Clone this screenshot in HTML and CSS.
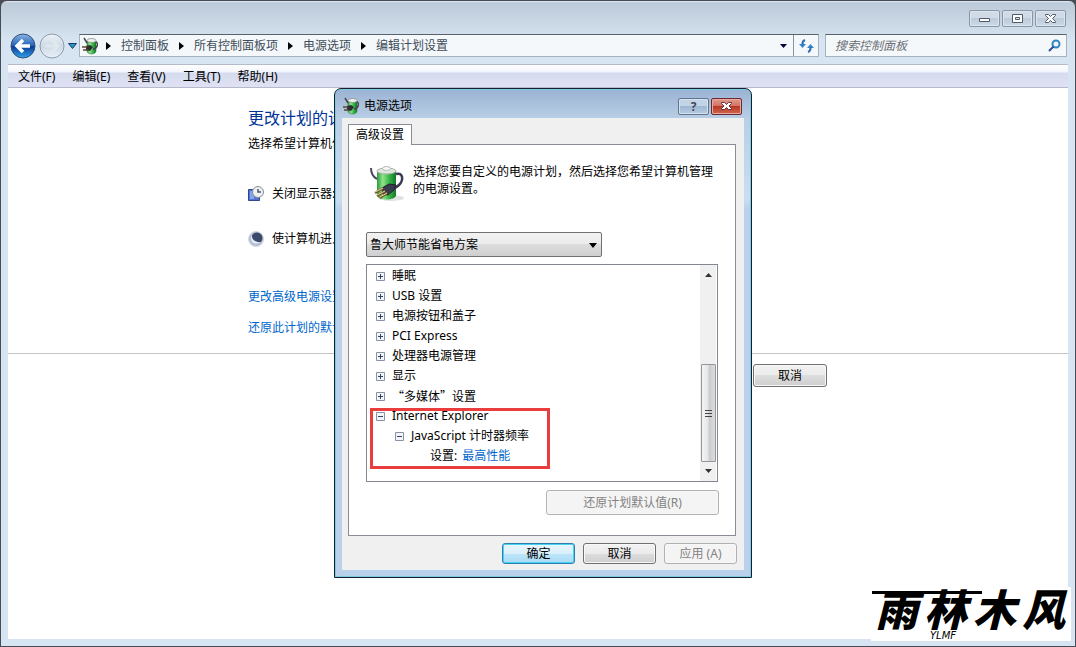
FILE: index.html
```html
<!DOCTYPE html>
<html lang="zh-CN">
<head>
    <meta charset="UTF-8">
    <meta name="viewport" content="width=device-width, initial-scale=1.0">
    <title>编辑计划设置</title>
    <link rel="stylesheet" href="styles.css">
</head>
<body>

<svg class="defs" aria-hidden="true">
    <defs>
        <linearGradient id="green" x1="0" x2="1" y1="0" y2="0">
            <stop offset="0" stop-color="#2c9a3c"/>
            <stop offset="0.3" stop-color="#8fe38c"/>
            <stop offset="0.65" stop-color="#35b544"/>
            <stop offset="1" stop-color="#14762a"/>
        </linearGradient>
        <linearGradient id="blue" x1="0" x2="0" y1="0" y2="1">
            <stop offset="0" stop-color="#8db4e2"/>
            <stop offset="0.48" stop-color="#2463b8"/>
            <stop offset="0.52" stop-color="#0b3a93"/>
            <stop offset="1" stop-color="#2fa4ee"/>
        </linearGradient>
        <linearGradient id="glass" x1="0" x2="0" y1="0" y2="1">
            <stop offset="0" stop-color="#eef3f8"/>
            <stop offset="0.5" stop-color="#cdd9e5"/>
            <stop offset="1" stop-color="#e9f1f8"/>
        </linearGradient>
        <symbol id="battery" viewBox="0 0 36 38">
            <ellipse cx="21" cy="33" rx="13" ry="3" fill="#e2e2e2"/>
            <path d="M7 6v24c0 6 19 6 19 0V6z" fill="url(#green)"/>
            <ellipse cx="16.500" cy="6" rx="9.500" ry="3" fill="#dfe5df" stroke="#a8b0a8"/>
            <ellipse cx="16.500" cy="3.500" rx="4" ry="2" fill="#f6f8f6" stroke="#b4bab4"/>
            <path d="M1 3c0 6 2 9 6 11" fill="none" stroke="#4a4862" stroke-width="2"/>
            <path d="M26 9c7-2 8 6 3 11-2 2-4 3-6 4" fill="none" stroke="#3d3b54" stroke-width="2.500"/>
            <path d="M12 23l7-4 7 1-2 5-6 5-5-1z" fill="#3a3b4c" stroke="#20212e"/>
            <path d="M13 23l-8 5M15 26l-8 5M17 28l-7 5" stroke="#6b5a2c" stroke-width="2.500"/>
            <path d="M13 23l-8 4M15 26l-8 4M17 28l-7 4" stroke="#f0d890"/>
        </symbol>
        <symbol id="battery-small" viewBox="0 0 16 18">
            <path d="M5 4v10c0 4 9 4 9 0V4z" fill="url(#green)" stroke="#2c6d36" stroke-width=".5"/>
            <ellipse cx="9.500" cy="3.500" rx="4.500" ry="2" fill="#eef2ee" stroke="#7c827c" stroke-width=".7"/>
            <path d="M2 1l3 5M14 5c3 1 1 7-3 7" fill="none" stroke="#47454f" stroke-width="1.500"/>
            <path d="M4 9l4-1 3 2-3 4-4-1z" fill="#2c2d35"/>
            <path d="M0 10h5M1 13h5" stroke="#594a2c" stroke-width="1.500"/>
        </symbol>
        <symbol id="right" viewBox="0 0 5 8"><path d="M0 0l5 4-5 4z"/></symbol>
        <symbol id="plus" viewBox="0 0 9 9">
            <path d="M.5.5h8v8h-8z" fill="#f4f5f8" stroke="#8991a5"/><path d="M2 4.500h5M4.500 2v5" stroke="#2d4368"/>
        </symbol>
        <symbol id="minus" viewBox="0 0 9 9">
            <path d="M.5.5h8v8h-8z" fill="#f4f5f8" stroke="#8991a5"/><path d="M2 4.500h5" stroke="#2d4368"/>
        </symbol>
    </defs>
</svg>

<div class="window">
    <header class="caption">
        <button class="win-btn" aria-label="最小化">
            <svg width="31" height="17"><path d="M10.500 8.500h10v3h-10z" fill="#fff" stroke="#505a68"/></svg>
        </button>
        <button class="win-btn" aria-label="最大化">
            <svg width="31" height="17"><path d="M10.500 4.500h10v8h-10z" fill="#fff" stroke="#505a68"/><path d="M13.500 7.500h4v2h-4z" fill="#dce5ee" stroke="#505a68"/></svg>
        </button>
        <button class="win-btn" aria-label="关闭">
            <svg width="31" height="17"><path d="M10.500 4.500h3l2 2 2-2h3v1l-3 3 3 3v1h-3l-2-2-2 2h-3v-1l3-3-3-3z" fill="#fff" stroke="#505a68"/></svg>
        </button>
    </header>

    <nav class="navbar">
        <div class="travel">
            <button aria-label="后退">
                <svg width="26" height="26"><circle cx="13" cy="13" r="12" fill="url(#blue)" stroke="#355078"/><path d="M20 13H8M13 7l-6 6 6 6" fill="none" stroke="#fff" stroke-width="3.500"/></svg>
            </button>
            <button aria-label="前进">
                <svg width="26" height="26"><circle cx="13" cy="13" r="12" fill="url(#glass)" stroke="#8d9aaa"/><path d="M6 13h12M13 7l6 6-6 6" fill="none" stroke="#dfe7ef" stroke-width="3"/></svg>
            </button>
            <button aria-label="最近的页面">
                <svg width="9" height="6"><path d="M.5.5h8l-4 5z" fill="#2596cc" stroke="#1c3c66"/></svg>
            </button>
        </div>
        <div class="address">
            <svg class="crumb-icon" width="16" height="18"><use href="#battery-small"/></svg>
            <svg width="5" height="8"><use href="#right"/></svg>
            <a href="#">控制面板</a>
            <svg width="5" height="8"><use href="#right"/></svg>
            <a href="#">所有控制面板项</a>
            <svg width="5" height="8"><use href="#right"/></svg>
            <a href="#">电源选项</a>
            <svg width="5" height="8"><use href="#right"/></svg>
            <a href="#">编辑计划设置</a>
            <button class="drop" aria-label="以前的位置"><svg width="7" height="4"><path d="M0 0h7L3.500 4z" fill="#00003c"/></svg></button>
            <button class="refresh" aria-label="刷新">
                <svg width="15" height="14"><path d="M0 5h7L3.500 9zM8 9h7l-3.500-4z" fill="#3585c8"/><path d="M6 1C3 2 3.500 4 3.500 6M9 13c3-1 2.500-3 2.500-5" fill="none" stroke="#2d70b4" stroke-width="2"/></svg>
            </button>
        </div>
        <div class="search">
            <input type="text" placeholder="搜索控制面板" aria-label="搜索控制面板">
            <svg width="13" height="13"><circle cx="8" cy="5" r="3.500" fill="#e9f6fe" stroke="#3383bf" stroke-width="2"/><path d="M5.500 7.500L1 12" stroke="#29508c" stroke-width="2"/></svg>
        </div>
    </nav>

    <div class="menubar">
        <button>文件(F)</button>
        <button>编辑(E)</button>
        <button>查看(V)</button>
        <button>工具(T)</button>
        <button>帮助(H)</button>
    </div>

    <main class="page">
        <section class="plan">
            <h1>更改计划的设</h1>
            <p class="intro">选择希望计算机使</p>
            <div class="option">
                <svg width="16" height="16"><path d="M.5 3.500h11v11H.5z" fill="#4f73cf" stroke="#31468e"/><path d="M2 5h4v8H2z" fill="#82a5ec"/><circle cx="10" cy="6" r="5.500" fill="#edf0f3" stroke="#858b96"/><path d="M10 3v3h3" fill="none" stroke="#4b5365" stroke-width="1.500"/></svg>
                <span>关闭显示器:</span>
            </div>
            <div class="option">
                <svg width="16" height="16"><circle cx="8" cy="8" r="7.500" fill="#b3bfd4" stroke="#d3d9e3"/><circle cx="9" cy="7" r="5.500" fill="#3c4a69"/><path d="M4 3c-1 5 3 9 9 8-4 4-13 1-9-8z" fill="#e6edf8"/></svg>
                <span>使计算机进入</span>
            </div>
            <a class="plan-link" href="#">更改高级电源设置</a>
            <a class="plan-link" href="#">还原此计划的默认</a>
        </section>
        <footer class="page-actions">
            <button class="btn">取消</button>
        </footer>
    </main>

    <!-- 电源选项对话框 -->
    <div class="dialog" role="dialog" aria-labelledby="dialog-title">
        <div class="dialog-caption">
            <svg width="16" height="18"><use href="#battery-small"/></svg>
            <h2 id="dialog-title">电源选项</h2>
            <button class="dlg-btn" aria-label="帮助">?</button>
            <button class="dlg-btn dlg-close" aria-label="关闭">
                <svg width="13" height="10"><path d="M1.500 1.500h3l2 2 2-2h3v1L9 5l2.500 2.500v1h-3l-2-2-2 2h-3v-1L4 5 1.500 2.500z" fill="#fff" stroke="#64343a"/></svg>
            </button>
        </div>
        <div class="dialog-body">
            <div class="tabs"><button class="tab">高级设置</button></div>
            <div class="panel">
                <div class="info">
                    <svg width="36" height="38"><use href="#battery"/></svg>
                    <p>选择您要自定义的电源计划，然后选择您希望计算机管理的电源设置。</p>
                </div>
                <div class="combo">
                    <select aria-label="电源计划">
                        <option>鲁大师节能省电方案</option>
                    </select>
                    <svg width="8" height="5"><path d="M0 0h8L4 5z"/></svg>
                </div>
                <div class="tree">
                    <ul>
                        <li><button aria-label="展开"><svg width="9" height="9"><use href="#plus"/></svg></button>睡眠</li>
                        <li><button aria-label="展开"><svg width="9" height="9"><use href="#plus"/></svg></button>USB 设置</li>
                        <li><button aria-label="展开"><svg width="9" height="9"><use href="#plus"/></svg></button>电源按钮和盖子</li>
                        <li><button aria-label="展开"><svg width="9" height="9"><use href="#plus"/></svg></button>PCI Express</li>
                        <li><button aria-label="展开"><svg width="9" height="9"><use href="#plus"/></svg></button>处理器电源管理</li>
                        <li><button aria-label="展开"><svg width="9" height="9"><use href="#plus"/></svg></button>显示</li>
                        <li><button aria-label="展开"><svg width="9" height="9"><use href="#plus"/></svg></button><span class="cjk">“多媒体”设置</span></li>
                        <li><button aria-label="折叠"><svg width="9" height="9"><use href="#minus"/></svg></button>Internet Explorer</li>
                        <li class="level-2"><button aria-label="折叠"><svg width="9" height="9"><use href="#minus"/></svg></button>JavaScript 计时器频率</li>
                        <li class="level-3">设置: <a href="#">最高性能</a></li>
                    </ul>
                    <div class="scrollbar">
                        <svg width="7" height="4"><path d="M0 4h7L3.500 0z" fill="#333"/></svg>
                        <div class="track">
                            <div class="thumb"><i></i><i></i><i></i></div>
                        </div>
                        <svg width="7" height="4"><path d="M0 0h7L3.500 4z" fill="#333"/></svg>
                    </div>
                    <div class="highlight"></div>
                </div>
                <button class="btn restore" disabled>还原计划默认值(R)</button>
            </div>
            <div class="dialog-actions">
                <button class="btn btn-default">确定</button>
                <button class="btn">取消</button>
                <button class="btn" disabled>应用 (A)</button>
            </div>
        </div>
    </div>

    <div class="logo">
        <div class="logo-name"><span>雨</span><span>林</span><span>木</span><span>风</span></div>
        <div class="logo-sub">YLMF</div>
    </div>
</div>

</body>
</html>
```

FILE: styles.css
```css
* {
    box-sizing: border-box;
}
body {
    margin: 0;
    background: #4a4d55;
    font-family: "Noto Sans", "Noto Sans CJK SC", sans-serif;
    font-size: 12px;
    line-height: 20px;
    color: #000;
}
button, input, select {
    margin: 0;
    padding: 0;
    border: none;
    background: none;
    font: inherit;
    color: inherit;
}
svg {
    display: block;
    flex: none;
}
h1, h2, p, ul {
    margin: 0;
    padding: 0;
    font-weight: normal;
}
a {
    color: #0066cc;
    text-decoration: none;
}
.defs {
    position: absolute;
    width: 0;
    height: 0;
}

/* main window */
.window {
    position: relative;
    display: flex;
    flex-direction: column;
    min-height: 100vh;
    padding: 0 7px 7px;
    border: 1px solid #474b55;
    border-radius: 7px 7px 0 0;
    background: linear-gradient(#e2e9f0 0, #bccad9 2px, #d7e4f1 40px);
}
.caption {
    display: flex;
    justify-content: flex-end;
    gap: 2px;
    height: 33px;
    padding: 9px 2px 0 0;
}
.win-btn {
    display: flex;
    align-items: center;
    justify-content: center;
    width: 31px;
    height: 17px;
    border: 1px solid #8996a6;
    border-radius: 2px;
    background: linear-gradient(#d0dbe7 50%, #bccada 50%, #ccd9e6);
    box-shadow: inset 0 0 0 1px #dce5ee;
}
.navbar {
    display: flex;
    height: 30px;
    padding-right: 1px;
}
.travel {
    display: flex;
    align-items: center;
    gap: 3px;
    width: 71px;
    height: 24px;
    padding-left: 2px;
}
.address {
    display: flex;
    flex: 1;
    align-items: center;
    gap: 10px;
    height: 23px;
    margin-right: 6px;
    border: 1px solid #a7b2be;
    border-top-color: #596269;
    background: #f5f8fb;
}
.address a {
    color: #3e4d59;
}
.crumb-icon {
    margin: 0 -2px 0 2px;
}
.drop {
    margin-left: auto;
}
.refresh {
    display: flex;
    align-items: center;
    justify-content: center;
    width: 25px;
    height: 21px;
    margin-left: -4px;
    border-left: 1px solid #8b949d;
}
.search {
    display: flex;
    align-items: center;
    width: 242px;
    height: 23px;
    padding: 0 5px 0 9px;
    border: 1px solid #a7b2be;
    border-top-color: #596269;
    background: #f5f8fb;
}
.search input {
    flex: 1;
    min-width: 0;
    outline: none;
}
.search input::placeholder {
    color: #6b7076;
    font-style: italic;
}
.menubar {
    display: flex;
    gap: 17px;
    height: 24px;
    padding: 2px 0 0 10px;
    border-top: 1px solid #b4bccc;
    border-bottom: 1px solid #b5b9cb;
    background: linear-gradient(#fff 0, #f2f5fb 7px, #d5dbee 8px, #e0e2f4);
}

/* page behind the dialog */
.page {
    flex: 1;
    background: #fff;
}
.plan {
    display: flex;
    flex-direction: column;
    align-items: flex-start;
    height: 266px;
    padding: 18px 0 0 240px;
    border-bottom: 1px solid #c4c4c8;
}
.plan h1 {
    font-size: 16px;
    line-height: 24px;
    color: #003399;
}
.intro {
    margin: 4px 0 30px;
}
.option {
    display: flex;
    align-items: center;
    gap: 8px;
    margin-bottom: 25px;
}
.plan-link {
    margin: 13px 0 -2px;
}
.page-actions {
    display: flex;
    justify-content: flex-end;
    padding: 10px 241px 0 0;
}
.btn {
    width: 74px;
    height: 23px;
    border: 1px solid #707070;
    border-radius: 3px;
    background: linear-gradient(#f2f2f2, #ebebeb 50%, #dddddd 50%, #cfcfcf);
    box-shadow: inset 0 0 0 1px #f8f8f8;
    line-height: 19px;
}
.btn:disabled {
    border-color: #adb2b5;
    background: #f4f4f4;
    color: #838383;
}
.btn-default {
    border-color: #2f7fae;
    background: linear-gradient(#eaf6fc, #d9f0fb 50%, #bee6fa 50%, #a9daf2);
    box-shadow: inset 0 0 0 1px #45d3f5;
}

/* dialog */
.dialog {
    position: absolute;
    left: 333px;
    top: 87px;
    width: 418px;
    padding: 0 7px 7px;
    border: 1px solid #16202c;
    border-radius: 7px 7px 0 0;
    background: linear-gradient(#9ab3d2, #b9cfe6 30px, #c9def0 110px, #b9d1ea 120px);
    box-shadow: inset 0 0 0 1px #7cc9e2;
}
.dialog-caption {
    display: flex;
    align-items: center;
    gap: 2px;
    height: 29px;
    padding: 5px 2px 0 1px;
}
.dialog-caption h2 {
    flex: 1;
    padding-left: 3px;
    font-size: 12px;
}
.dlg-btn {
    display: flex;
    align-items: center;
    justify-content: center;
    width: 31px;
    height: 17px;
    border: 1px solid #61758d;
    border-radius: 2px;
    background: linear-gradient(#c3d4e7 50%, #9fb7d2 50%, #b6cce2);
    box-shadow: inset 0 0 0 1px #d4e2f0;
    font-weight: bold;
    line-height: 15px;
    color: #3f4a5a;
}
.dlg-close {
    border-color: #6d2732;
    background: linear-gradient(#e09a8d, #d36f5f 50%, #b93925 50%, #cf674e);
    box-shadow: inset 0 0 0 1px #e5aaa0;
}
.dialog-body {
    padding: 6px 8px 6px 6px;
    background: #f0f0f0;
}
.tabs {
    display: flex;
}
.tab {
    z-index: 1;
    width: 64px;
    height: 21px;
    margin-bottom: -1px;
    border: 1px solid #898c95;
    border-bottom: none;
    background: #fff;
    line-height: 18px;
}
.panel {
    display: flex;
    flex-direction: column;
    padding: 20px 17px 20px;
    border: 1px solid #898c95;
    background: #fff;
}
.info {
    display: flex;
    gap: 7px;
    height: 67px;
    padding-left: 4px;
}
.info p {
    width: 304px;
    margin-top: -2px;
    line-height: 17px;
}
.combo {
    position: relative;
    width: 236px;
    margin-bottom: 7px;
}
.combo select {
    display: block;
    width: 100%;
    height: 25px;
    padding-left: 3px;
    border: 1px solid #707070;
    border-radius: 2px;
    background: linear-gradient(#f2f2f2, #ebebeb 50%, #dddddd 50%, #cfcfcf);
    appearance: none;
}
.combo svg {
    position: absolute;
    right: 5px;
    top: 11px;
    pointer-events: none;
}
.tree {
    position: relative;
    display: flex;
    width: 352px;
    height: 218px;
    padding-right: 1px;
    border: 1px solid #828790;
}
.tree ul {
    flex: 1;
    padding-top: 1px;
    list-style: none;
}
.tree li {
    display: flex;
    align-items: center;
    gap: 7px;
    height: 20px;
    padding-left: 9px;
}
.tree .level-2 {
    padding-left: 28px;
}
.tree .level-3 {
    gap: 5px;
    padding-left: 63px;
}
.cjk {
    font-family: "Noto Sans CJK SC", sans-serif;
}
.scrollbar {
    display: flex;
    flex-direction: column;
    align-items: center;
    width: 16px;
    padding: 8px 0;
    background: #f0f0f0;
}
.track {
    display: flex;
    flex: 1;
    align-items: flex-end;
    padding: 7px 0;
}
.thumb {
    display: flex;
    flex-direction: column;
    align-items: center;
    justify-content: center;
    gap: 2px;
    width: 15px;
    height: 98px;
    border: 1px solid #969696;
    border-radius: 1px;
    background: linear-gradient(to right, #f4f4f4, #e6e6e8 45%, #cacbce 55%, #dcdcdf);
}
.thumb i {
    width: 7px;
    height: 1px;
    background: #444;
}
.highlight {
    position: absolute;
    left: 3px;
    top: 143px;
    width: 180px;
    height: 61px;
    border: 3px solid #ea3e3e;
}
.restore {
    align-self: flex-end;
    width: 173px;
    height: 25px;
    margin: 8px -1px 0 0;
}
.dialog-actions {
    display: flex;
    justify-content: flex-end;
    gap: 8px;
    margin: 7px -1px 0 0;
}
.dialog-actions .btn {
    width: 73px;
    height: 21px;
}

/* corner logo */
.logo {
    position: absolute;
    right: 4px;
    bottom: 5px;
    width: 200px;
    background: #fff;
    font-style: italic;
}
.logo::before {
    content: "";
    position: absolute;
    left: 1px;
    top: 4px;
    width: 110px;
    height: 3px;
    background: #000;
}
.logo-name {
    display: flex;
    justify-content: space-between;
    padding: 0 6px 0 4px;
    font-family: "Noto Sans CJK SC", sans-serif;
    font-size: 43px;
    font-weight: 900;
    line-height: 40px;
}
.logo-sub {
    padding: 4px 0 0 59px;
    font-family: "DejaVu Sans", sans-serif;
    font-size: 10px;
    line-height: 10px;
}
```
